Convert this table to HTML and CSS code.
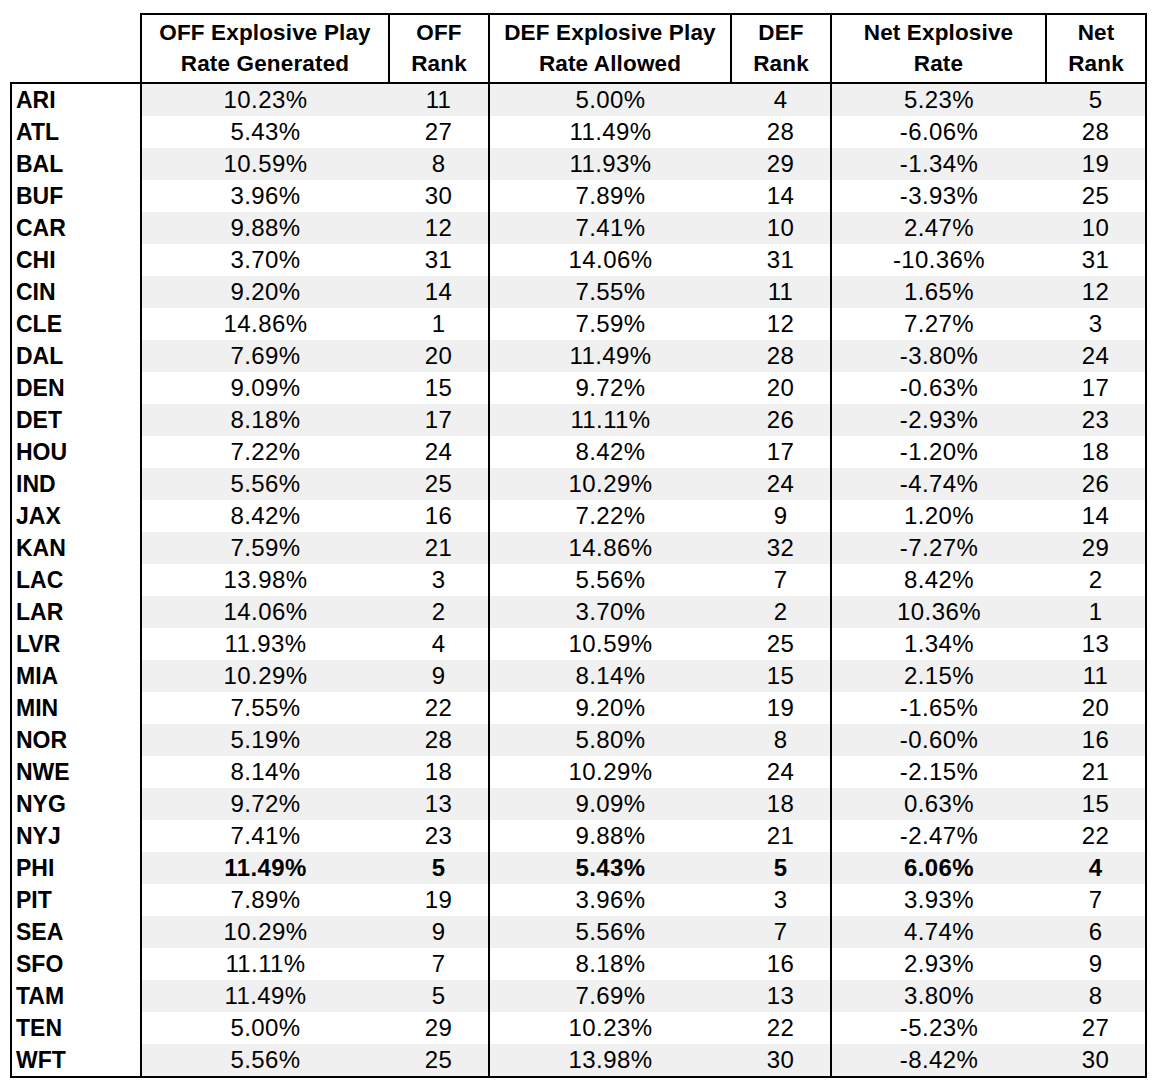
FILE: index.html
```html
<!DOCTYPE html>
<html>
<head>
<meta charset="utf-8">
<link rel="stylesheet" href="styles.css">
</head>
<body>
<div class="page">
<table class="stats">
<colgroup>
<col class="c-team"><col class="c-rate1"><col class="c-rank"><col class="c-rate2"><col class="c-rank"><col class="c-rate3"><col class="c-rank">
</colgroup>
<thead>
<tr>
<th class="corner"></th>
<th>OFF Explosive Play<br>Rate Generated</th>
<th>OFF<br>Rank</th>
<th>DEF Explosive Play<br>Rate Allowed</th>
<th>DEF<br>Rank</th>
<th>Net Explosive<br>Rate</th>
<th>Net<br>Rank</th>
</tr>
</thead>
<tbody>
<tr><td>ARI</td><td>10.23%</td><td>11</td><td>5.00%</td><td>4</td><td>5.23%</td><td>5</td></tr>
<tr><td>ATL</td><td>5.43%</td><td>27</td><td>11.49%</td><td>28</td><td>-6.06%</td><td>28</td></tr>
<tr><td>BAL</td><td>10.59%</td><td>8</td><td>11.93%</td><td>29</td><td>-1.34%</td><td>19</td></tr>
<tr><td>BUF</td><td>3.96%</td><td>30</td><td>7.89%</td><td>14</td><td>-3.93%</td><td>25</td></tr>
<tr><td>CAR</td><td>9.88%</td><td>12</td><td>7.41%</td><td>10</td><td>2.47%</td><td>10</td></tr>
<tr><td>CHI</td><td>3.70%</td><td>31</td><td>14.06%</td><td>31</td><td>-10.36%</td><td>31</td></tr>
<tr><td>CIN</td><td>9.20%</td><td>14</td><td>7.55%</td><td>11</td><td>1.65%</td><td>12</td></tr>
<tr><td>CLE</td><td>14.86%</td><td>1</td><td>7.59%</td><td>12</td><td>7.27%</td><td>3</td></tr>
<tr><td>DAL</td><td>7.69%</td><td>20</td><td>11.49%</td><td>28</td><td>-3.80%</td><td>24</td></tr>
<tr><td>DEN</td><td>9.09%</td><td>15</td><td>9.72%</td><td>20</td><td>-0.63%</td><td>17</td></tr>
<tr><td>DET</td><td>8.18%</td><td>17</td><td>11.11%</td><td>26</td><td>-2.93%</td><td>23</td></tr>
<tr><td>HOU</td><td>7.22%</td><td>24</td><td>8.42%</td><td>17</td><td>-1.20%</td><td>18</td></tr>
<tr><td>IND</td><td>5.56%</td><td>25</td><td>10.29%</td><td>24</td><td>-4.74%</td><td>26</td></tr>
<tr><td>JAX</td><td>8.42%</td><td>16</td><td>7.22%</td><td>9</td><td>1.20%</td><td>14</td></tr>
<tr><td>KAN</td><td>7.59%</td><td>21</td><td>14.86%</td><td>32</td><td>-7.27%</td><td>29</td></tr>
<tr><td>LAC</td><td>13.98%</td><td>3</td><td>5.56%</td><td>7</td><td>8.42%</td><td>2</td></tr>
<tr><td>LAR</td><td>14.06%</td><td>2</td><td>3.70%</td><td>2</td><td>10.36%</td><td>1</td></tr>
<tr><td>LVR</td><td>11.93%</td><td>4</td><td>10.59%</td><td>25</td><td>1.34%</td><td>13</td></tr>
<tr><td>MIA</td><td>10.29%</td><td>9</td><td>8.14%</td><td>15</td><td>2.15%</td><td>11</td></tr>
<tr><td>MIN</td><td>7.55%</td><td>22</td><td>9.20%</td><td>19</td><td>-1.65%</td><td>20</td></tr>
<tr><td>NOR</td><td>5.19%</td><td>28</td><td>5.80%</td><td>8</td><td>-0.60%</td><td>16</td></tr>
<tr><td>NWE</td><td>8.14%</td><td>18</td><td>10.29%</td><td>24</td><td>-2.15%</td><td>21</td></tr>
<tr><td>NYG</td><td>9.72%</td><td>13</td><td>9.09%</td><td>18</td><td>0.63%</td><td>15</td></tr>
<tr><td>NYJ</td><td>7.41%</td><td>23</td><td>9.88%</td><td>21</td><td>-2.47%</td><td>22</td></tr>
<tr class="highlight"><td>PHI</td><td>11.49%</td><td>5</td><td>5.43%</td><td>5</td><td>6.06%</td><td>4</td></tr>
<tr><td>PIT</td><td>7.89%</td><td>19</td><td>3.96%</td><td>3</td><td>3.93%</td><td>7</td></tr>
<tr><td>SEA</td><td>10.29%</td><td>9</td><td>5.56%</td><td>7</td><td>4.74%</td><td>6</td></tr>
<tr><td>SFO</td><td>11.11%</td><td>7</td><td>8.18%</td><td>16</td><td>2.93%</td><td>9</td></tr>
<tr><td>TAM</td><td>11.49%</td><td>5</td><td>7.69%</td><td>13</td><td>3.80%</td><td>8</td></tr>
<tr><td>TEN</td><td>5.00%</td><td>29</td><td>10.23%</td><td>22</td><td>-5.23%</td><td>27</td></tr>
<tr><td>WFT</td><td>5.56%</td><td>25</td><td>13.98%</td><td>30</td><td>-8.42%</td><td>30</td></tr>
</tbody>
</table>
</div>
</body>
</html>
```

FILE: styles.css
```css
html, body {
  margin: 0;
  padding: 0;
  background: #ffffff;
}

.page {
  padding: 13px 0 0 10px;
}

.stats {
  border-collapse: collapse;
  table-layout: fixed;
  width: 1136px;
  font-family: "Liberation Sans", Arial, sans-serif;
  color: #000;
}

.c-team { width: 130px; }
.c-rate1 { width: 248px; }
.c-rate2 { width: 242px; }
.c-rate3 { width: 215px; }
.c-rank { width: 100px; }

.stats th {
  border: 2px solid #000;
  font-weight: bold;
  font-size: 22.5px;
  line-height: 31px;
  padding: 2px 0 3px;
  text-align: center;
  vertical-align: middle;
  letter-spacing: 0.15px;
}

.stats th.corner {
  border: none;
}

.stats td {
  height: 32px;
  padding: 0;
  font-size: 24px;
  line-height: 32px;
  text-align: center;
  white-space: nowrap;
  letter-spacing: 0.4px;
}

.stats tbody tr:nth-child(odd) td {
  background: #f0f0f0;
}

.stats tbody td:first-child {
  background: #ffffff !important;
  border-left: 2px solid #000;
  border-right: 2px solid #000;
  text-align: left;
  padding-left: 4px;
  font-weight: bold;
  font-size: 23px;
  letter-spacing: 0;
}

.stats tbody tr:first-child td:first-child {
  border-top: 2px solid #000;
}

.stats tbody td:nth-child(3),
.stats tbody td:nth-child(5),
.stats tbody td:nth-child(7) {
  border-right: 2px solid #000;
}

.stats tbody tr:last-child td {
  border-bottom: 2px solid #000;
}

.stats tr.highlight td {
  font-weight: bold;
}
```
